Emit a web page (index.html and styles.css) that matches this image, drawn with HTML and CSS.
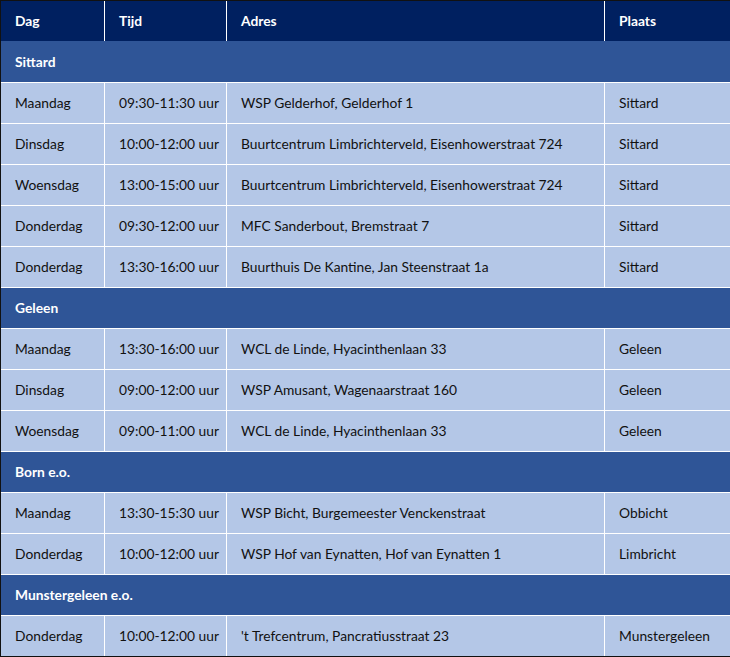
FILE: index.html
```html
<!DOCTYPE html>
<html lang="nl">
<head>
<meta charset="utf-8">
<title>Spreekuren</title>
<link rel="stylesheet" href="styles.css">
</head>
<body>
<div class="table">
  <div class="row head">
    <div class="cell">Dag</div><div class="cell">Tijd</div><div class="cell">Adres</div><div class="cell">Plaats</div>
  </div>
  <div class="body">
    <div class="row section first"><div class="cell">Sittard</div></div>
    <div class="row data"><div class="cell">Maandag</div><div class="cell">09:30-11:30 uur</div><div class="cell">WSP Gelderhof, Gelderhof 1</div><div class="cell">Sittard</div></div>
    <div class="row data"><div class="cell">Dinsdag</div><div class="cell">10:00-12:00 uur</div><div class="cell">Buurtcentrum Limbrichterveld, Eisenhowerstraat 724</div><div class="cell">Sittard</div></div>
    <div class="row data"><div class="cell">Woensdag</div><div class="cell">13:00-15:00 uur</div><div class="cell">Buurtcentrum Limbrichterveld, Eisenhowerstraat 724</div><div class="cell">Sittard</div></div>
    <div class="row data"><div class="cell">Donderdag</div><div class="cell">09:30-12:00 uur</div><div class="cell">MFC Sanderbout, Bremstraat 7</div><div class="cell">Sittard</div></div>
    <div class="row data"><div class="cell">Donderdag</div><div class="cell">13:30-16:00 uur</div><div class="cell">Buurthuis De Kantine, Jan Steenstraat 1a</div><div class="cell">Sittard</div></div>
    <div class="row section"><div class="cell">Geleen</div></div>
    <div class="row data"><div class="cell">Maandag</div><div class="cell">13:30-16:00 uur</div><div class="cell">WCL de Linde, Hyacinthenlaan 33</div><div class="cell">Geleen</div></div>
    <div class="row data"><div class="cell">Dinsdag</div><div class="cell">09:00-12:00 uur</div><div class="cell">WSP Amusant, Wagenaarstraat 160</div><div class="cell">Geleen</div></div>
    <div class="row data"><div class="cell">Woensdag</div><div class="cell">09:00-11:00 uur</div><div class="cell">WCL de Linde, Hyacinthenlaan 33</div><div class="cell">Geleen</div></div>
    <div class="row section"><div class="cell">Born e.o.</div></div>
    <div class="row data"><div class="cell">Maandag</div><div class="cell">13:30-15:30 uur</div><div class="cell">WSP Bicht, Burgemeester Venckenstraat</div><div class="cell">Obbicht</div></div>
    <div class="row data"><div class="cell">Donderdag</div><div class="cell">10:00-12:00 uur</div><div class="cell">WSP Hof van Eynatten, Hof van Eynatten 1</div><div class="cell">Limbricht</div></div>
    <div class="row section"><div class="cell">Munstergeleen e.o.</div></div>
    <div class="row data"><div class="cell">Donderdag</div><div class="cell">10:00-12:00 uur</div><div class="cell">'t Trefcentrum, Pancratiusstraat 23</div><div class="cell">Munstergeleen</div></div>
  </div>
</div>
</body>
</html>
```
FILE: styles.css
```css
html, body {
  margin: 0;
  padding: 0;
  background: #ffffff;
}
.table {
  width: 729px;
  border-top: 1px solid #111111;
  border-left: 1px solid #111111;
  border-bottom: 1px solid #111111;
  font-family: Lato, "Open Sans", sans-serif;
  font-size: 13.8px;
  color: #111111;
}
.row {
  display: grid;
  grid-template-columns: 103px 121px 377px 125px;
  column-gap: 1px;
  height: 40px;
}
.cell {
  display: flex;
  align-items: center;
  padding-left: 14px;
  padding-bottom: 2px;
  white-space: nowrap;
}
.head {
  background: #ffffff;
}
.head .cell {
  background: #002060;
  color: #ffffff;
  font-weight: 700;
}
.body .row {
  border-top: 1px solid #ffffff;
}
.body .row.first {
  border-top-color: #2f5597;
}
.section {
  background: #2f5597;
  display: flex;
}
.section .cell {
  color: #ffffff;
  font-weight: 700;
}
.data {
  background: #ffffff;
}
.data .cell {
  background: #b4c7e7;
}
```
